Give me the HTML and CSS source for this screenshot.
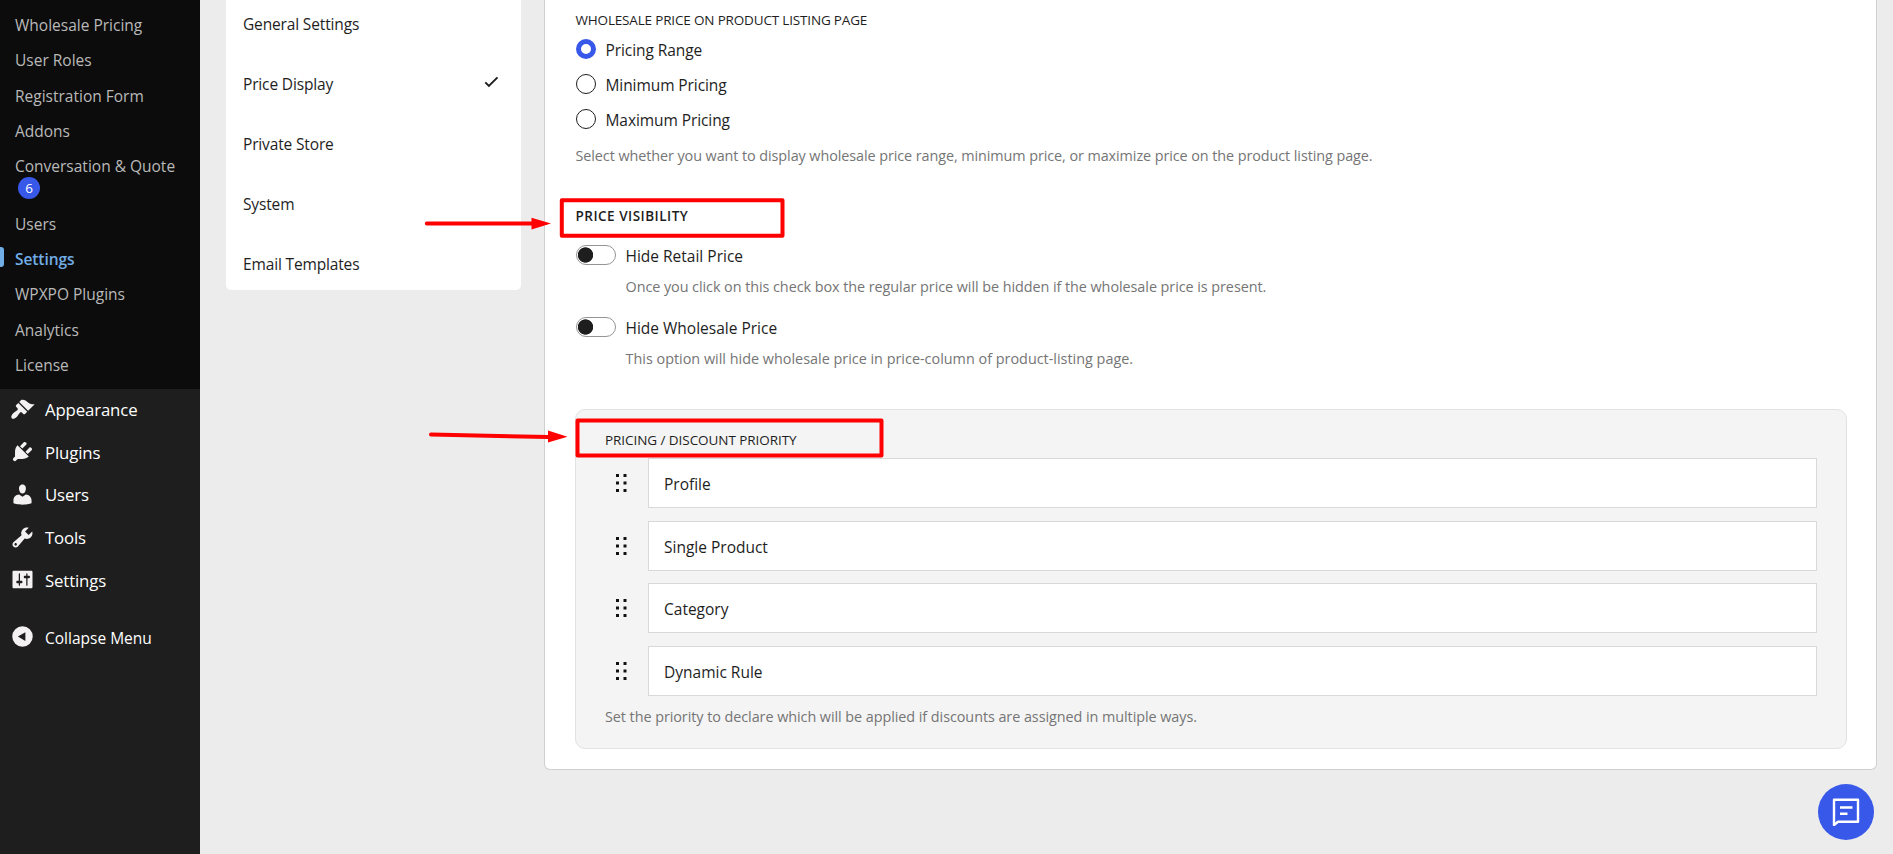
FILE: index.html
```html
<!DOCTYPE html>
<html lang="en">
<head>
<meta charset="utf-8">
<title>Settings</title>
<link rel="stylesheet" href="styles.css">
</head>
<body>
<div class="app">
  <aside class="sidebar">
    <ul class="submenu">
      <li>Wholesale Pricing</li>
      <li>User Roles</li>
      <li>Registration Form</li>
      <li>Addons</li>
      <li class="wide">Conversation &amp; Quote<span class="count">6</span></li>
      <li>Users</li>
      <li class="current">Settings</li>
      <li>WPXPO Plugins</li>
      <li>Analytics</li>
      <li>License</li>
    </ul>
    <ul class="menu">
      <li><svg viewBox="0 0 20 20"><path d="M14.48 11.06L7.41 3.99l1.5-1.5c.5-.56 2.3-.47 3.51.32 1.21.8 1.43 1.28 2.91 2.1 1.18.64 2.45 1.26 4.45.85zm-.71.71L6.7 4.7 4.93 6.47c-.39.39-.39 1.02 0 1.41l1.06 1.06c.39.39.39 1.03 0 1.42-.6.6-1.43 1.11-2.21 1.69-.35.26-.7.53-1.01.84C1.43 14.23.4 16.08 1.4 17.07c.99 1 2.84-.03 4.18-1.36.31-.31.58-.66.85-1.02.57-.78 1.08-1.61 1.69-2.21.39-.39 1.02-.39 1.41 0l1.06 1.06c.39.39 1.02.39 1.41 0z"/></svg><span>Appearance</span></li>
      <li><svg viewBox="0 0 20 20"><path d="M13.11 4.36L9.87 7.6 8 5.73l3.24-3.24c.35-.34 1.05-.2 1.56.32.52.51.66 1.21.31 1.55zm-8 1.77l.91-1.12 9.01 9.01-1.19.84c-.71.71-2.63 1.16-3.82 1.16H6.14L4.9 17.26c-.59.59-1.54.59-2.12 0-.59-.58-.59-1.53 0-2.12l1.24-1.24v-3.88c0-1.13.4-3.19 1.09-3.89zm7.26 3.97l3.24-3.24c.34-.35 1.04-.21 1.55.31.52.51.66 1.21.31 1.55l-3.24 3.25z"/></svg><span>Plugins</span></li>
      <li><svg viewBox="0 0 20 20"><path d="M10 9.25c-2.27 0-2.73-3.44-2.73-3.44C7 4.02 7.82 2 9.97 2c2.16 0 2.98 2.02 2.71 3.81 0 0-.41 3.44-2.68 3.44zm0 2.57L12.72 10c2.39 0 4.52 2.33 4.52 4.53v2.49s-3.65 1.13-7.24 1.13c-3.65 0-7.24-1.13-7.24-1.13v-2.49c0-2.25 1.94-4.48 4.47-4.48z"/></svg><span>Users</span></li>
      <li><svg viewBox="0 0 20 20"><path d="M16.68 9.77c-1.34 1.34-3.3 1.67-4.95.99l-5.41 6.52c-.99.99-2.59.99-3.58 0s-.99-2.59 0-3.57l6.52-5.42c-.68-1.65-.35-3.61.99-4.95 1.28-1.28 3.12-1.62 4.72-1.06l-2.89 2.89 2.82 2.82 2.86-2.87c.53 1.58.18 3.39-1.08 4.65zM3.81 16.21c.4.39 1.04.39 1.43 0 .4-.4.4-1.04 0-1.43-.39-.4-1.03-.4-1.43 0-.39.39-.39 1.03 0 1.43z"/></svg><span>Tools</span></li>
      <li><svg viewBox="0 0 20 20"><path d="M18 16V4c0-.55-.45-1-1-1H3c-.55 0-1 .45-1 1v12c0 .55.45 1 1 1h14c.55 0 1-.45 1-1zM8 11h1c.55 0 1 .45 1 1s-.45 1-1 1H8v1.5c0 .28-.22.5-.5.5s-.5-.22-.5-.5V13H6c-.55 0-1-.45-1-1s.45-1 1-1h1V5.5c0-.28.22-.5.5-.5s.5.22.5.5V11zm5-2h-1c-.55 0-1-.45-1-1s.45-1 1-1h1V5.5c0-.28.22-.5.5-.5s.5.22.5.5V7h1c.55 0 1 .45 1 1s-.45 1-1 1h-1v5.5c0 .28-.22.5-.5.5s-.5-.22-.5-.5V9z"/></svg><span>Settings</span></li>
      <li class="collapse"><svg viewBox="0 0 20 20"><path fill-rule="evenodd" d="M10 1.800a8.200 8.200 0 1 1 0 16.400a8.200 8.200 0 0 1 0-16.400zM6.300 10l6 3.500v-7z"/></svg><span>Collapse Menu</span></li>
    </ul>
  </aside>
  <main class="content">
    <nav class="tabs">
      <a>General Settings</a>
      <a>Price Display<svg class="check" viewBox="0 0 15 12"><path d="M1.300 6.400l3.600 3.600L13.500 1.400"/></svg></a>
      <a>Private Store</a>
      <a>System</a>
      <a>Email Templates</a>
    </nav>
    <section class="card">
      <h3 class="heading">WHOLESALE PRICE ON PRODUCT LISTING PAGE</h3>
      <div class="radios">
        <label><i class="radio on"></i>Pricing Range</label>
        <label><i class="radio"></i>Minimum Pricing</label>
        <label><i class="radio"></i>Maximum Pricing</label>
      </div>
      <p class="help">Select whether you want to display wholesale price range, minimum price, or maximize price on the product listing page.</p>
      <h3 class="heading strong">PRICE VISIBILITY</h3>
      <div class="option">
        <label><i class="toggle"></i>Hide Retail Price</label>
        <p class="help">Once you click on this check box the regular price will be hidden if the wholesale price is present.</p>
      </div>
      <div class="option">
        <label><i class="toggle"></i>Hide Wholesale Price</label>
        <p class="help loose">This option will hide wholesale price in price-column of product-listing page.</p>
      </div>
      <div class="panel">
        <h3 class="heading">PRICING / DISCOUNT PRIORITY</h3>
        <div class="rows">
          <div class="row"><svg class="grip" viewBox="0 0 12 20"><path d="M1 1h3v3H1zM8.500 1h3v3h-3zM1 8.500h3v3H1zM8.500 8.500h3v3h-3zM1 16h3v3H1zM8.500 16h3v3h-3z"/></svg><div class="field">Profile</div></div>
          <div class="row"><svg class="grip" viewBox="0 0 12 20"><path d="M1 1h3v3H1zM8.500 1h3v3h-3zM1 8.500h3v3H1zM8.500 8.500h3v3h-3zM1 16h3v3H1zM8.500 16h3v3h-3z"/></svg><div class="field">Single Product</div></div>
          <div class="row"><svg class="grip" viewBox="0 0 12 20"><path d="M1 1h3v3H1zM8.500 1h3v3h-3zM1 8.500h3v3H1zM8.500 8.500h3v3h-3zM1 16h3v3H1zM8.500 16h3v3h-3z"/></svg><div class="field">Category</div></div>
          <div class="row"><svg class="grip" viewBox="0 0 12 20"><path d="M1 1h3v3H1zM8.500 1h3v3h-3zM1 8.500h3v3H1zM8.500 8.500h3v3h-3zM1 16h3v3H1zM8.500 16h3v3h-3z"/></svg><div class="field">Dynamic Rule</div></div>
        </div>
        <p class="help">Set the priority to declare which will be applied if discounts are assigned in multiple ways.</p>
      </div>
    </section>
  </main>
</div>
<svg class="marks" viewBox="0 0 1893 854">
  <g fill="none" stroke="#f00" stroke-width="4" stroke-linecap="round" stroke-linejoin="round">
    <rect x="561.800" y="200.300" width="220.700" height="35.400"/>
    <rect x="577.500" y="420.500" width="304" height="35"/>
    <path d="M426.800 223.500H532M431 434.500L548 437"/>
  </g>
  <path fill="#f00" d="M531.500 217.700L551 223.600L531.500 229.500zM548 430.500L567.500 436.700L548 442.500z"/>
</svg>
<button class="chat"><svg viewBox="0 0 28 28"><path d="M2 1.800h24v22H6L2 27z"/><path d="M8 9.500h12.500M8 15.800h7.500"/></svg></button>
</body>
</html>
```
FILE: styles.css
```css
* { box-sizing: border-box; }
body {
  margin: 0;
  height: 854px;
  overflow: hidden;
  background: #ececec;
  color: #1e1e1e;
  font-family: "Open Sans", "Noto Sans", sans-serif;
  font-size: 15.5px;
  letter-spacing: -0.08px;
}
ul, h3, p { margin: 0; padding: 0; }
ul { list-style: none; }
.app { display: flex; height: 854px; }
.sidebar { width: 200px; background: #1e1e1e; flex: none; }
.submenu {
  height: 389px;
  padding-top: 8px;
  background: #0c0c0c;
  color: #b9b9b9;
  line-height: 22.75px;
  letter-spacing: 0;
}
.submenu li { padding: 6.25px 0 6.25px 15px; height: 35.2px; }
.submenu .wide { height: 58px; }
.submenu .current {
  color: #72aee6;
  font-weight: 600;
  letter-spacing: -0.08px;
  position: relative;
}
.submenu .current::before {
  content: "";
  position: absolute;
  left: 0;
  top: 5px;
  width: 4px;
  height: 20px;
  border-radius: 0 3px 3px 0;
  background: #72aee6;
}
.count {
  display: block;
  width: 22px;
  height: 22px;
  margin: -1px 0 0 3px;
  border-radius: 50%;
  background: #3858e9;
  color: #fff;
  font-size: 13.5px;
  line-height: 23px;
  text-align: center;
}
.menu { color: #fff; font-size: 16.8px; letter-spacing: -0.14px; }
.menu li { display: flex; align-items: center; height: 42.6px; padding-left: 10px; gap: 10px; }
.menu span { margin-top: -1px; }
.menu svg { width: 25px; height: 25px; margin-top: -2px; fill: #f3f1f1; }
.menu .collapse { margin-top: 15px; font-size: 15.5px; letter-spacing: 0; }
.menu .collapse span { margin-top: 0; }
.menu .collapse svg { margin-top: -4px; }

.content { display: flex; align-items: flex-start; padding-left: 26px; gap: 23px; flex: 1; }
.tabs {
  width: 295px;
  height: 290px;
  padding: 0 22px 0 17px;
  border-radius: 0 0 5px 5px;
  background: #fff;
  letter-spacing: -0.15px;
}
.tabs a { display: flex; align-items: center; justify-content: space-between; height: 60px; }
.tabs a:first-child { height: 54px; padding-bottom: 6px; }
.check { width: 15px; height: 12px; margin-top: -4px; fill: none; stroke: #1e1e1e; stroke-width: 1.9; }

.card {
  width: 1333px;
  height: 770px;
  padding: 8px 29px 0 30.5px;
  border: 1px solid #d0d0d0;
  border-top: 0;
  border-radius: 0 0 6px 6px;
  background: #fff;
}
.heading { font-size: 13.5px; font-weight: 400; line-height: 24px; letter-spacing: -0.17px; }
.heading.strong { margin-top: 36px; font-weight: 600; letter-spacing: 0.5px; }
.radios { display: flex; flex-direction: column; }
.radios label { display: flex; align-items: center; gap: 10px; height: 35px; }
.radio { width: 20px; height: 20px; margin-top: -2px; border: 1px solid #1e1e1e; border-radius: 50%; }
.radio.on { border: 5.500px solid #3858e9; }
.help { color: #757575; font-size: 14.4px; line-height: 24px; letter-spacing: -0.08px; }
.radios + .help { margin-top: 7px; }
.option { padding-left: 50px; height: 72px; }
.heading.strong + .option { margin-top: 16px; }
.option label { display: flex; align-items: center; height: 24px; margin-left: -50px; gap: 10px; letter-spacing: 0; }
.option .help { margin-top: 7px; letter-spacing: -0.06px; }
.option .help.loose { letter-spacing: 0; }
.toggle {
  width: 40px;
  height: 20px;
  margin-top: -2px;
  border: 1px solid #949494;
  border-radius: 10px;
  background: radial-gradient(circle at 8.500px 9px, #1e1e1e 7.300px, transparent 8px);
}
.panel {
  width: 1272px;
  height: 340px;
  margin: 21px 0 0 -0.5px;
  padding: 18px 29px 0 29px;
  border: 1px solid #e2e2e2;
  border-radius: 10px;
  background: #f4f4f4;
}
.panel .heading { letter-spacing: -0.06px; }
.rows { display: flex; flex-direction: column; gap: 12.500px; margin-top: 6px; }
.row { display: flex; align-items: center; height: 50px; }
.grip { width: 12px; height: 20px; margin: 0 21px 0 10px; fill: #111; flex: none; }
.field {
  flex: 1;
  height: 50px;
  padding: 2px 15px 0;
  border: 1px solid #d9d9d9;
  background: #fff;
  line-height: 47px;
  letter-spacing: 0;
}
.panel .help { margin-top: 9px; letter-spacing: -0.06px; }
.marks { position: absolute; left: 0; top: 0; width: 1893px; height: 854px; pointer-events: none; }
.chat {
  position: fixed;
  right: 19px;
  bottom: 14px;
  display: flex;
  align-items: center;
  justify-content: center;
  width: 56px;
  height: 56px;
  padding: 0;
  border: 0;
  border-radius: 50%;
  background: #3858e9;
}
.chat svg { width: 28px; height: 28px; fill: none; stroke: #fff; stroke-width: 2.4; stroke-linejoin: round; }
```
